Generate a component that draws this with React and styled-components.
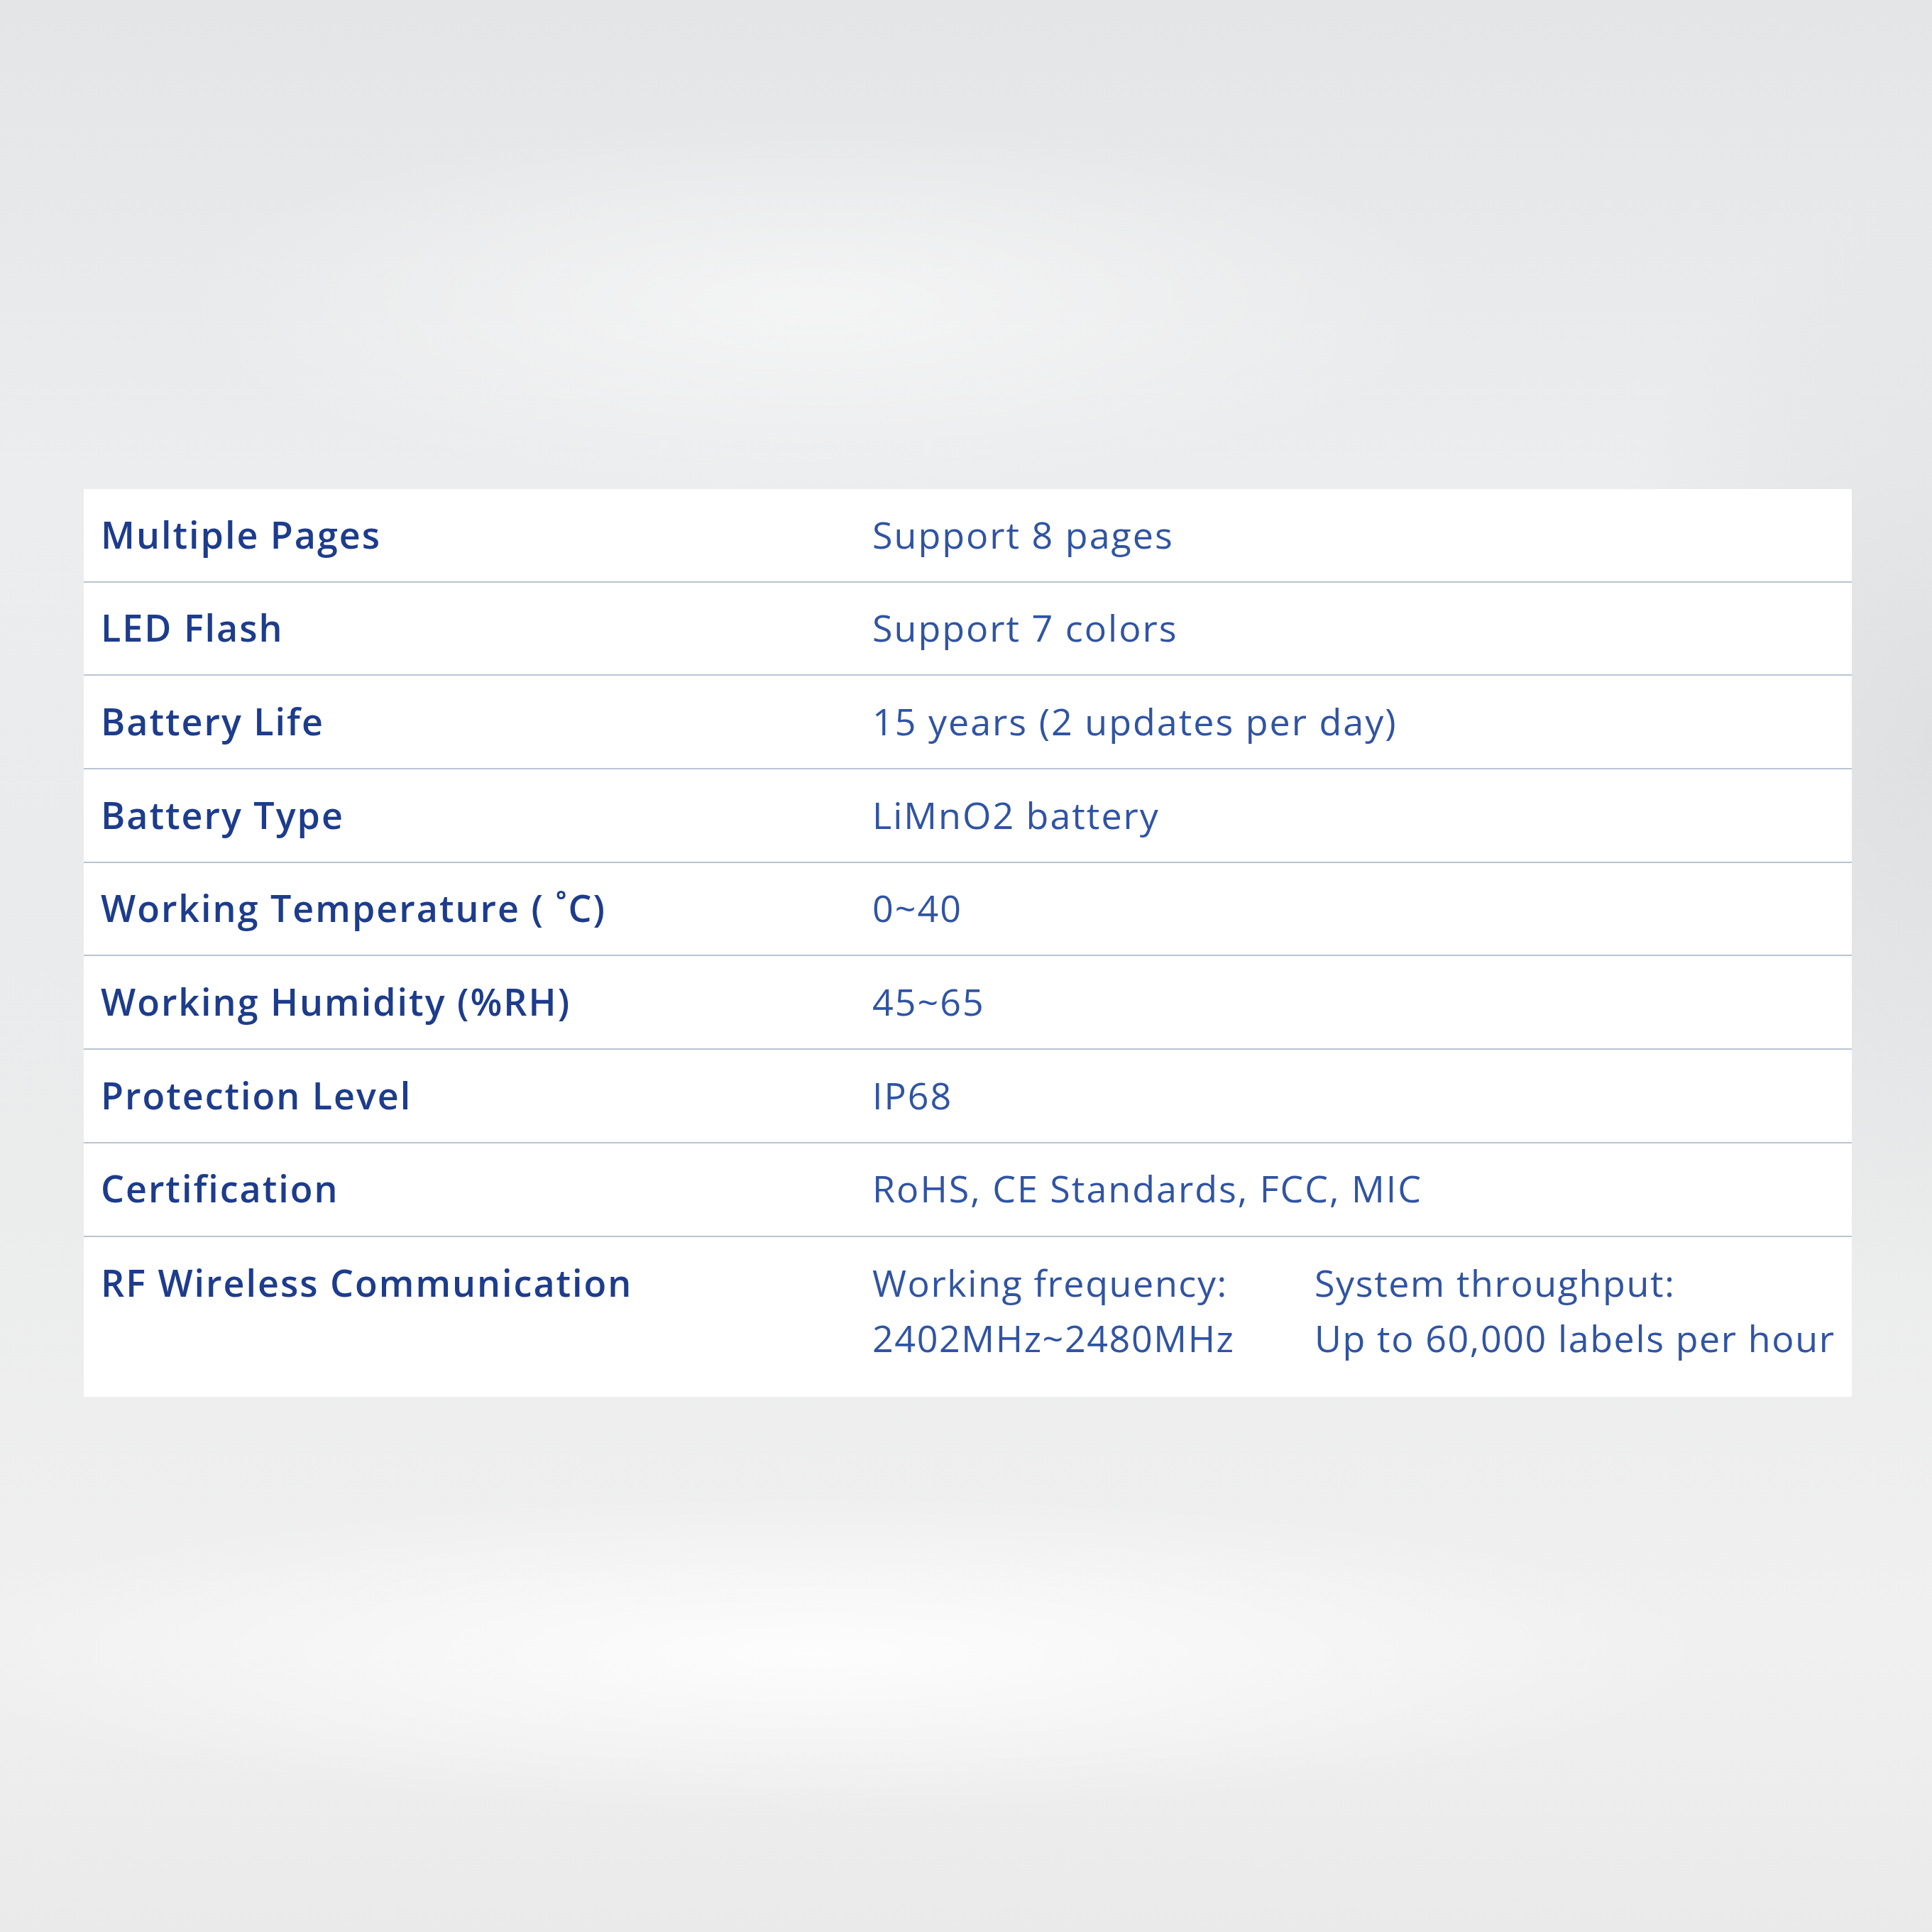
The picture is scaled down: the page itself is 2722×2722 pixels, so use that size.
import styled, { createGlobalStyle } from "styled-components";

const GlobalStyle = createGlobalStyle`
  html, body {
    margin: 0;
    padding: 0;
  }
  body {
    font-family: "Open Sans", "Liberation Sans", sans-serif;
  }
`;

const specs = [
  { label: "Multiple Pages", value: "Support 8 pages" },
  { label: "LED Flash", value: "Support 7 colors" },
  { label: "Battery Life", value: "15 years (2 updates per day)" },
  { label: "Battery Type", value: "LiMnO2 battery" },
  { label: "Working Temperature ( ˚C)", value: "0~40" },
  { label: "Working Humidity (%RH)", value: "45~65" },
  { label: "Protection Level", value: "IP68" },
  { label: "Certification", value: "RoHS, CE Standards, FCC, MIC" },
];

function App() {
  return (
    <Page>
      <GlobalStyle />
      <SpecTable>
        {specs.map((s) => (
          <Row key={s.label}>
            <Label>{s.label}</Label>
            <Value>{s.value}</Value>
          </Row>
        ))}
        <Row last>
          <Label>RF Wireless Communication</Label>
          <Split>
            <Value>
              Working frequency:
              <br />
              2402MHz~2480MHz
            </Value>
            <Value>
              System throughput:
              <br />
              Up to 60,000 labels per hour
            </Value>
          </Split>
        </Row>
      </SpecTable>
    </Page>
  );
}

const Page = styled.div`
  width: 2722px;
  height: 2722px;
  box-sizing: border-box;
  padding: 689px 113px 0 118px;
  background:
    radial-gradient(ellipse 1300px 380px at 1150px 430px, rgba(255, 255, 255, 0.5), rgba(255, 255, 255, 0) 70%),
    radial-gradient(ellipse 1700px 300px at 1150px 2330px, rgba(255, 255, 255, 0.85), rgba(255, 255, 255, 0) 75%),
    radial-gradient(ellipse 700px 1100px at 2722px 1050px, rgba(212, 214, 216, 0.55), rgba(212, 214, 216, 0) 70%),
    linear-gradient(180deg, #e4e5e6 0%, #ecedee 25%, #eaebec 45%, #ebecec 62%, #f0f0f0 85%, #eaeaea 100%);
`;

const SpecTable = styled.div`
  width: 2491px;
  background: #ffffff;
  display: flex;
  flex-direction: column;
`;

const Row = styled.div`
  display: grid;
  grid-template-columns: 1111px 1fr;
  padding: ${(p) => (p.last ? "25px 0 44px" : "24.5px 0 27.2px")};
  border-bottom: ${(p) => (p.last ? "none" : "2px solid #b8c4d3")};
  line-height: 78px;
  font-size: 52px;
  letter-spacing: 2px;
`;

const Label = styled.div`
  padding-left: 24px;
  font-weight: 600;
  color: #1d3c8c;
  white-space: nowrap;
`;

const Value = styled.div`
  font-weight: 400;
  color: #3054a3;
  white-space: nowrap;
`;

const Split = styled.div`
  display: grid;
  grid-template-columns: 623px 1fr;
  letter-spacing: 1.6px;
`;

export default App;
